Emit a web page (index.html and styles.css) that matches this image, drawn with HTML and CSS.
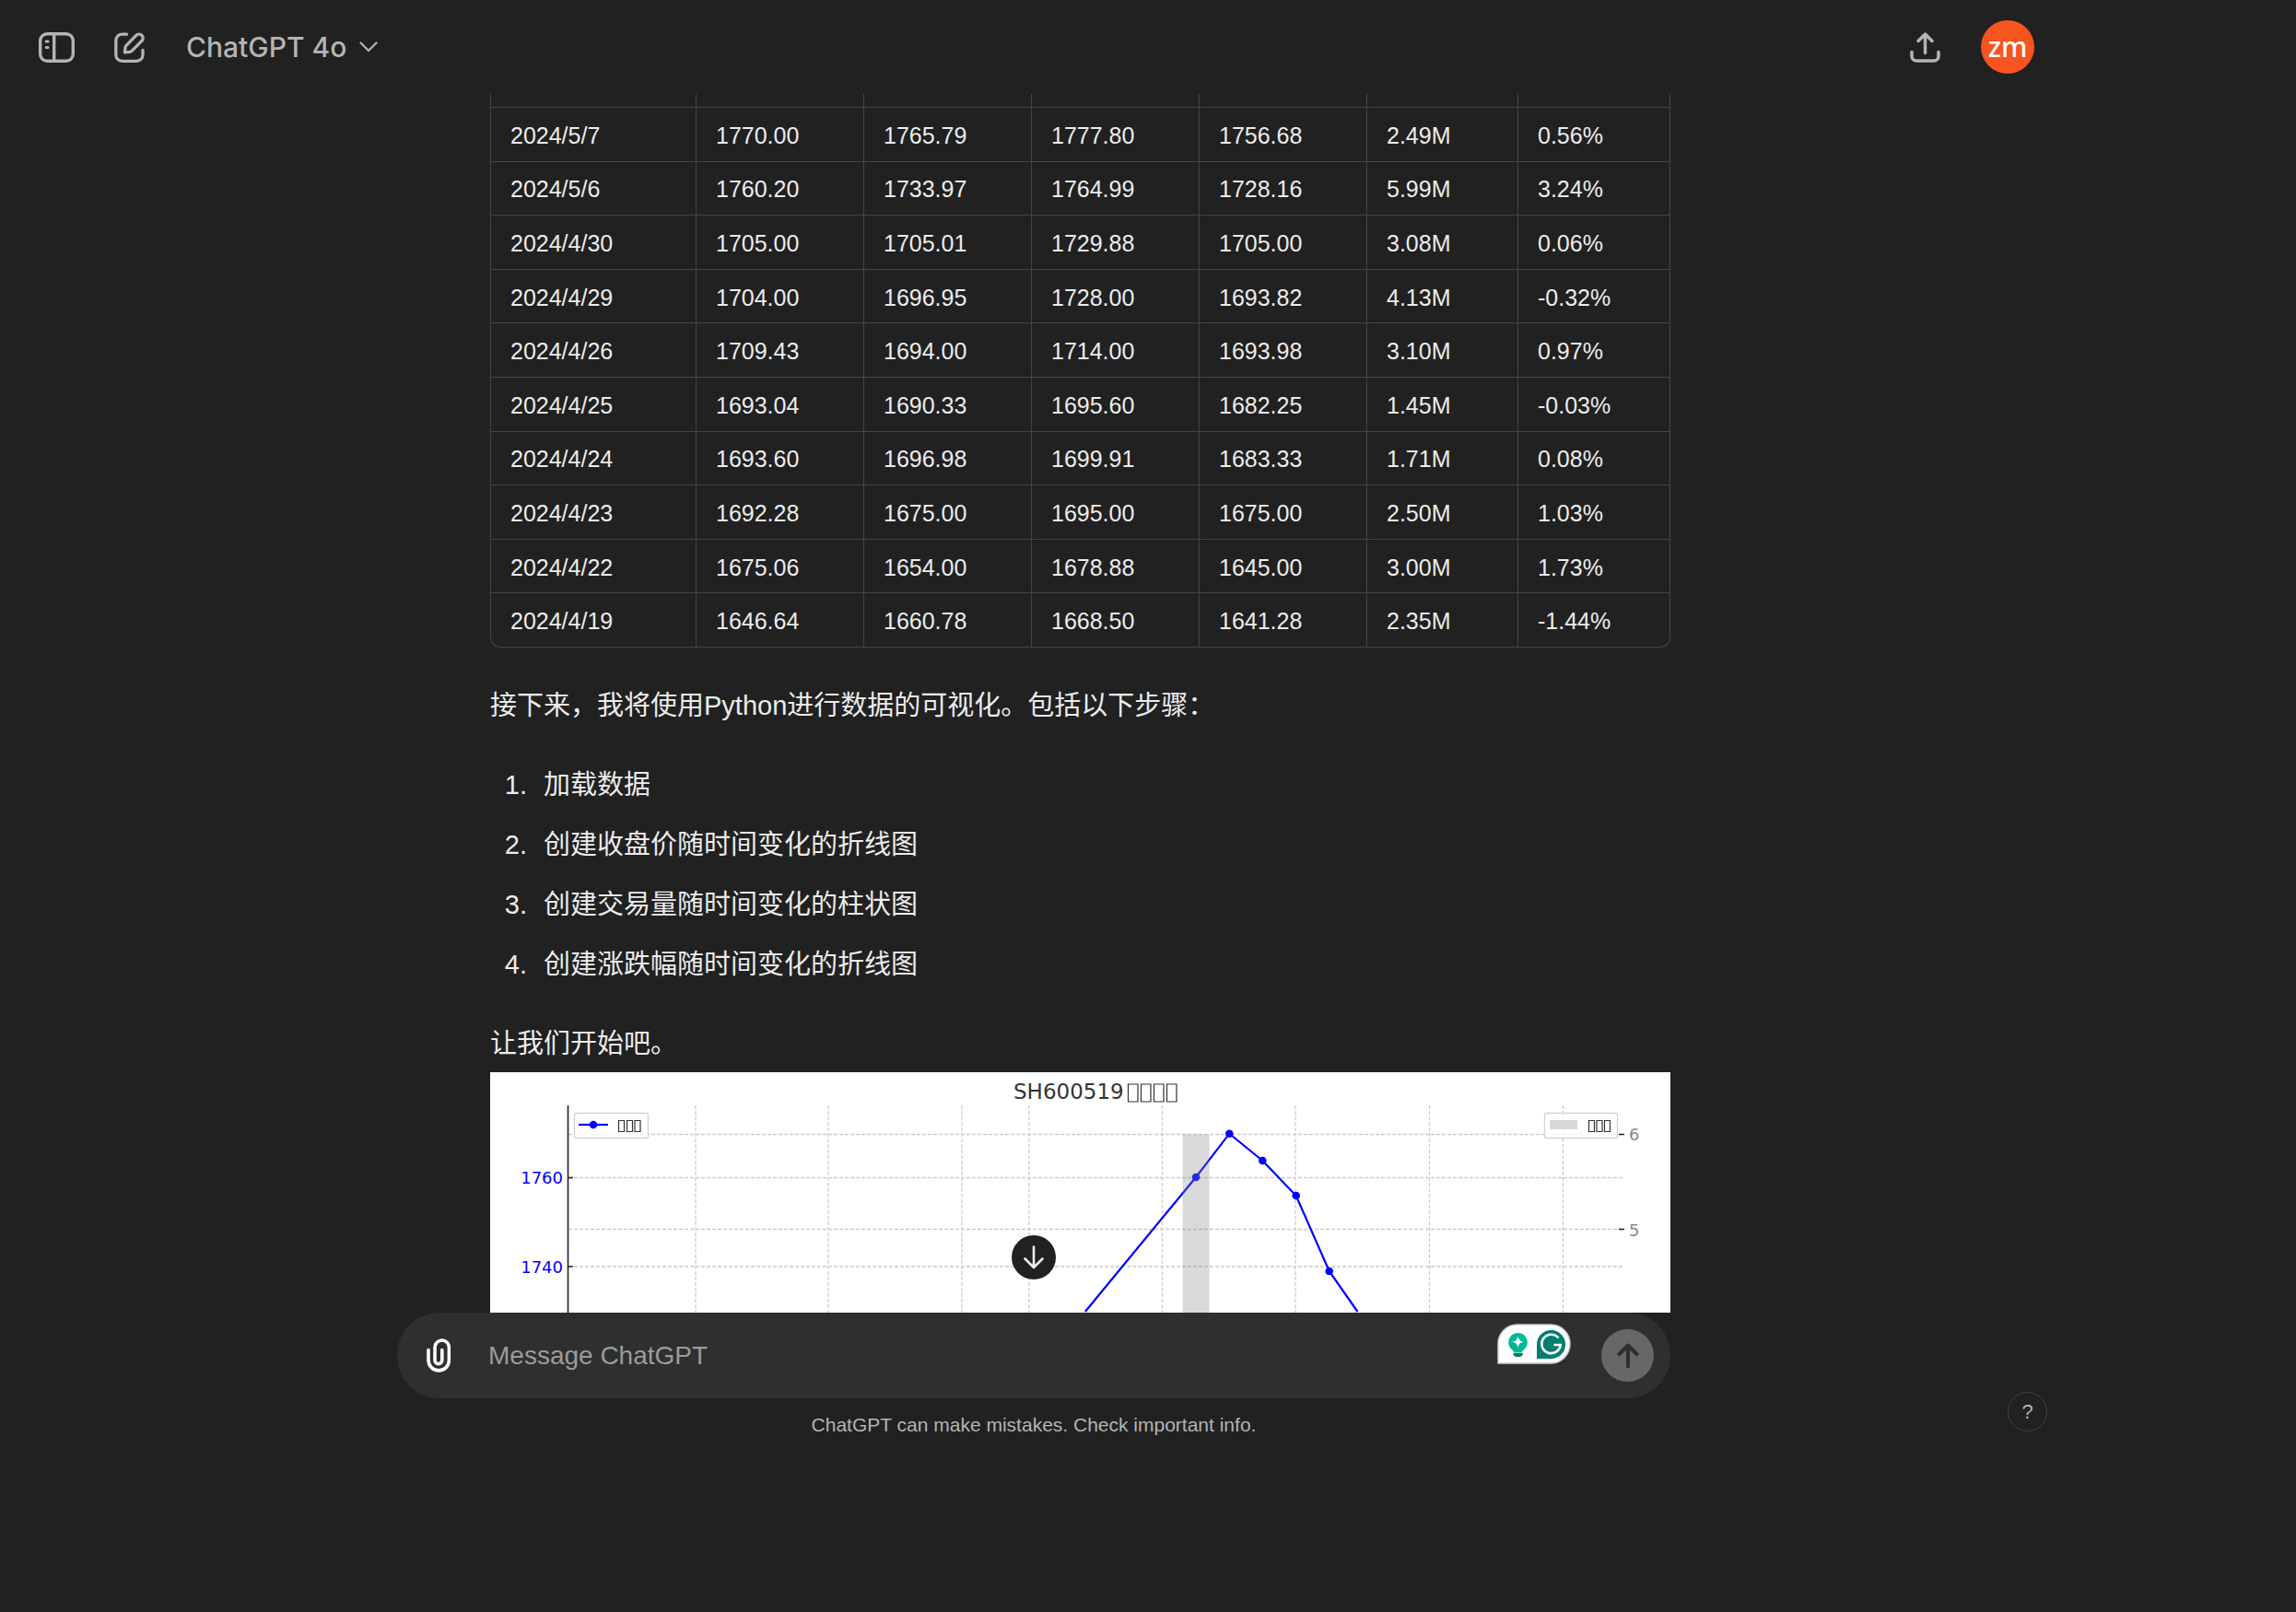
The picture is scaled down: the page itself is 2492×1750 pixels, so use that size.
FILE: index.html
```html
<!DOCTYPE html>
<html lang="zh-CN">
<head>
<meta charset="utf-8">
<meta name="viewport" content="width=device-width, initial-scale=1">
<title>ChatGPT</title>
<link rel="stylesheet" href="styles.css">
</head>
<body>
<div class="app">
  <header class="topbar">
    <div class="topbar-group">
      <button class="icon-button" type="button" aria-label="Open sidebar">
        <svg class="icon-sidebar" viewBox="0 0 39 33" fill="none" stroke="currentColor" stroke-width="3.4" stroke-linecap="round"><rect x="1.7" y="1.7" width="35.6" height="29.6" rx="7.5"/><path d="M16.7 2v29" stroke-linecap="butt"/><path d="M8.2 10h1.8M8.2 16.5h1.8" stroke-width="3.2"/></svg>
      </button>
      <button class="icon-button" type="button" aria-label="New chat">
        <svg class="icon-edit" viewBox="0 0 33 33" fill="none" stroke="currentColor" stroke-width="3.3" stroke-linecap="round" stroke-linejoin="round"><path d="M13.5 2.2H9C4.5 2.2 1.8 4.9 1.8 9.500v14.700c0 4.400 2.700 7.100 7.200 7.100h14.700c4.500 0 7.300-2.700 7.300-7.100v-4.700"/><path d="M11.400 21.900l.6-5.300c.1-.9.5-1.700 1.100-2.300L23.800 3.300a4.300 4.300 0 0 1 6.100 6.100L19 20.300c-.6.600-1.400 1-2.300 1.100z"/></svg>
      </button>
      <button class="model-button" type="button">ChatGPT 4o
        <svg class="icon-chevron" viewBox="0 0 20 12" fill="none" stroke="currentColor" stroke-width="2.200" stroke-linecap="round" stroke-linejoin="round"><path d="M1.500 1.500L10 10l8.500-8.500"/></svg>
      </button>
    </div>
    <div class="topbar-group topbar-right">
      <button class="icon-button" type="button" aria-label="Share">
        <svg class="icon-share" viewBox="0 0 33 33" fill="none" stroke="currentColor" stroke-width="3.500" stroke-linecap="round" stroke-linejoin="round"><path d="M16.500 22.500V2.500M9 9.500l7.500-7.500L24 9.500M2 21.500v4.500a5 5 0 0 0 5 5h19a5 5 0 0 0 5-5v-4.500"/></svg>
      </button>
      <button class="avatar" type="button">zm</button>
    </div>
  </header>

  <main class="thread">
    <article class="message">
      <table class="quotes">
        <colgroup><col class="col-date"><col class="col-price"><col class="col-price"><col class="col-price"><col class="col-price"><col class="col-volume"><col class="col-change"></colgroup>
        <tbody>
          <tr class="row-cut"><td></td><td></td><td></td><td></td><td></td><td></td><td></td></tr>
          <tr><td>2024/5/7</td><td>1770.00</td><td>1765.79</td><td>1777.80</td><td>1756.68</td><td>2.49M</td><td>0.56%</td></tr>
          <tr><td>2024/5/6</td><td>1760.20</td><td>1733.97</td><td>1764.99</td><td>1728.16</td><td>5.99M</td><td>3.24%</td></tr>
          <tr><td>2024/4/30</td><td>1705.00</td><td>1705.01</td><td>1729.88</td><td>1705.00</td><td>3.08M</td><td>0.06%</td></tr>
          <tr><td>2024/4/29</td><td>1704.00</td><td>1696.95</td><td>1728.00</td><td>1693.82</td><td>4.13M</td><td>-0.32%</td></tr>
          <tr><td>2024/4/26</td><td>1709.43</td><td>1694.00</td><td>1714.00</td><td>1693.98</td><td>3.10M</td><td>0.97%</td></tr>
          <tr><td>2024/4/25</td><td>1693.04</td><td>1690.33</td><td>1695.60</td><td>1682.25</td><td>1.45M</td><td>-0.03%</td></tr>
          <tr><td>2024/4/24</td><td>1693.60</td><td>1696.98</td><td>1699.91</td><td>1683.33</td><td>1.71M</td><td>0.08%</td></tr>
          <tr><td>2024/4/23</td><td>1692.28</td><td>1675.00</td><td>1695.00</td><td>1675.00</td><td>2.50M</td><td>1.03%</td></tr>
          <tr><td>2024/4/22</td><td>1675.06</td><td>1654.00</td><td>1678.88</td><td>1645.00</td><td>3.00M</td><td>1.73%</td></tr>
          <tr><td>2024/4/19</td><td>1646.64</td><td>1660.78</td><td>1668.50</td><td>1641.28</td><td>2.35M</td><td>-1.44%</td></tr>
        </tbody>
      </table>
      <p>接下来，我将使用Python进行数据的可视化。包括以下步骤：</p>
      <ol class="steps">
        <li>加载数据</li>
        <li>创建收盘价随时间变化的折线图</li>
        <li>创建交易量随时间变化的柱状图</li>
        <li>创建涨跌幅随时间变化的折线图</li>
      </ol>
      <p>让我们开始吧。</p>
      <svg class="chart" viewBox="0 0 1281 640" role="img" aria-label="SH600519">
        <rect width="1281" height="640" fill="#fff"/>
        <g class="grid">
          <path d="M223 36V600M367 36V600M512 36V600M585 36V600M729.500 36V600M874 36V600M1019.500 36V600M1164.500 36V600"/>
          <path d="M85 67.500H1231M85 114.500H1231M85 170.500H1231M85 211H1231"/>
        </g>
        <path class="axis" d="M84.500 36V600M85 114.500h5M85 211h5M1225 67.500h6M1225 170.500h6"/>
        <path class="series" d="M645.800 260L766 114 802.300 66.700 838.300 96 874.700 134 910.700 216 941.500 260"/>
        <g fill="#00f"><circle cx="766" cy="114" r="4.300"/><circle cx="802.300" cy="66.700" r="4.300"/><circle cx="838.300" cy="96" r="4.300"/><circle cx="874.700" cy="134" r="4.300"/><circle cx="910.700" cy="216" r="4.300"/></g>
        <rect x="751.600" y="67.500" width="29" height="532" fill="#808080" fill-opacity=".3"/>
        <g class="legend">
          <rect x="91.500" y="44.500" width="80" height="27" rx="2"/>
          <rect x="1144.500" y="44.500" width="79" height="27" rx="2"/>
        </g>
        <path class="series" d="M96 57h32"/><circle cx="112" cy="57" r="4.300" fill="#00f"/>
        <rect x="1150" y="52" width="30" height="10" fill="#d8d8d8"/>
        <g class="tofu">
          <path d="M139.500 52.500h6v12h-6zM148.500 52.500h6v12h-6zM157 52.500h6v12h-6z"/>
          <path d="M1192.500 52.500h6v12h-6zM1201 52.500h6v12h-6zM1209.500 52.500h6v12h-6z"/>
          <path d="M692.500 13h10.500v19h-10.500zM706.500 13h10.500v19h-10.500zM720.500 13h10.500v19h-10.500zM734.500 13h10.500v19h-10.500z"/>
        </g>
        <text class="chart-title" x="568" y="29">SH600519</text>
        <text class="tick-left" x="79" y="121">1760</text>
        <text class="tick-left" x="79" y="218">1740</text>
        <text class="tick-right" x="1236" y="74">6</text>
        <text class="tick-right" x="1236" y="178">5</text>
      </svg>
    </article>
  </main>

  <footer class="dock">
    <button class="scroll-down" type="button" aria-label="Scroll to bottom">
      <svg class="icon-down" viewBox="0 0 24 26" fill="none" stroke="currentColor" stroke-width="2.600" stroke-linecap="round" stroke-linejoin="round"><path d="M12 1.500v22M2.500 14.500l9.500 9.500 9.500-9.500"/></svg>
    </button>
    <form class="composer">
      <button class="attach" type="button" aria-label="Attach files">
        <svg class="icon-clip" viewBox="0 0 26 37" fill="none" stroke="currentColor" stroke-width="3.600" stroke-linecap="round"><path d="M2 12.500v11.200a11.200 11.200 0 0 0 22.400 0V9.700a7.700 7.700 0 0 0-15.400 0v14a3.900 3.900 0 0 0 7.800 0V12.500"/></svg>
      </button>
      <input class="prompt" type="text" placeholder="Message ChatGPT" aria-label="Message ChatGPT">
      <button class="assist" type="button" aria-label="Writing assistant">
        <svg viewBox="0 0 80 44"><path d="M1 43V22A21 21 0 0 1 22 1H58a21 21 0 0 1 0 42z" fill="#fff" stroke="#c9cbd6" stroke-width="1.500"/><path d="M22.500 10a10.300 10.300 0 0 0-5.200 19.200l1.200 2.300h8l1.200-2.300A10.300 10.300 0 0 0 22.500 10z" fill="#04b894"/><path d="M22.500 13.500c1 4.200 2 5.200 6 6.200-4 1-5 2-6 6.200-1-4.200-2-5.200-6-6.200 4-1 5-2 6-6.200z" fill="#fff"/><path d="M17.300 32h10.600c0 2.700-1.700 4-3.800 4h-3c-2.100 0-3.800-1.300-3.800-4z" fill="#027e6f"/><path d="M43 38V22a15.500 15.500 0 1 1 15.500 16z" fill="#027e6f"/><path d="M66.500 15.500a10.200 10.200 0 1 0 2.200 7.500h-7.200" fill="none" stroke="#fff" stroke-width="2.600"/></svg>
      </button>
      <button class="send" type="submit" aria-label="Send">
        <svg class="icon-up" viewBox="0 0 24 28" fill="none" stroke="currentColor" stroke-width="4" stroke-linecap="round" stroke-linejoin="round"><path d="M12 25.500V3M2.500 12L12 2.500 21.500 12"/></svg>
      </button>
    </form>
    <p class="disclaimer">ChatGPT can make mistakes. Check important info.</p>
    <button class="help" type="button" aria-label="Help">?</button>
  </footer>
</div>
</body>
</html>
```
FILE: styles.css
```css
* { box-sizing: border-box; }

body {
  margin: 0;
  padding-right: 248px;
  background: #212121;
  color: #ececec;
  font-family: "Liberation Sans", "Noto Sans CJK SC", sans-serif;
  font-size: 29px;
  line-height: 50px;
}

button {
  padding: 0;
  border: 0;
  background: none;
  color: inherit;
  font: inherit;
  cursor: pointer;
}

svg { display: block; }

.app {
  display: flex;
  flex-direction: column;
  height: 90vh;
}

/* Top bar */
.topbar {
  display: flex;
  flex: none;
  align-items: center;
  justify-content: space-between;
  height: 102px;
  padding: 0 36px 0 42px;
  color: #b4b4b4;
}

.topbar-group { display: flex; align-items: center; gap: 43px; }
.topbar-right { gap: 44px; }
.icon-sidebar { width: 39px; height: 33px; }
.icon-edit, .icon-share { width: 33px; height: 33px; }

.model-button {
  display: flex;
  align-items: center;
  gap: 14px;
  padding-left: 2px;
  font-family: Inter, sans-serif;
  font-size: 30px;
  font-weight: 500;
}

.icon-chevron { width: 20px; height: 12px; }

.avatar {
  width: 58px;
  height: 58px;
  border-radius: 50%;
  background: #f7541f;
  color: #fff;
  font-family: "Noto Sans", sans-serif;
  font-size: 30px;
  font-weight: 500;
  line-height: 52px;
}

/* Conversation */
.thread { flex: 1; min-height: 0; overflow: hidden; }

.message {
  max-width: 1382px;
  margin: 0 auto;
  padding-left: 101px;
}

.quotes {
  width: 100%;
  height: 601px;
  table-layout: fixed;
  border-collapse: separate;
  border-spacing: 0;
  font-size: 25px;
  line-height: 36px;
}

.col-date { width: 224px; }
.col-price { width: 182px; }
.col-volume { width: 164px; }
.col-change { width: 165px; }

.quotes td {
  padding: 2px 0 0 21px;
  border-right: 1px solid #444;
  border-bottom: 1px solid #444;
}

.quotes td:first-child { border-left: 1px solid #444; }
.row-cut { height: 15px; }
.quotes .row-cut td { padding: 0; }
.quotes tr:last-child td:first-child { border-bottom-left-radius: 11px; }
.quotes tr:last-child td:last-child { border-bottom-right-radius: 11px; }

.message p { margin: 38px 0 36px; }

.steps {
  display: flex;
  flex-direction: column;
  gap: 15px;
  margin: 36px 0;
  padding-left: 48px;
}

.steps li { padding-left: 10px; }
.message p:last-of-type { margin: 36px 0 6px; }

/* Chart */
.chart { width: 100%; height: auto; font-family: "DejaVu Sans", sans-serif; }
.grid { fill: none; stroke: #ccc; stroke-width: 1.3; stroke-dasharray: 4 2; }
.axis { fill: none; stroke: #222; stroke-width: 1.6; }
.series { fill: none; stroke: #00f; stroke-width: 2.2; }
.legend { fill: #fff; fill-opacity: .8; stroke: #d4d4d4; stroke-width: 1.4; }
.tofu { fill: none; stroke: #333; stroke-width: 1.2; }
.chart-title { fill: #333; font-size: 23px; }
.tick-left { fill: #00f; font-size: 18px; text-anchor: end; }
.tick-right { fill: #888; font-size: 18px; }

/* Composer */
.dock { position: relative; flex: none; height: 150px; }

.composer {
  display: flex;
  align-items: center;
  max-width: 1382px;
  height: 93px;
  margin: 0 auto;
  padding: 0 18px 0 32px;
  border-radius: 46px;
  background: #2f2f2f;
}

.attach { color: #fff; }
.icon-clip { width: 26px; height: 37px; }

.prompt {
  flex: 1;
  min-width: 0;
  height: 50px;
  margin-left: 41px;
  padding: 0;
  border: 0;
  outline: 0;
  background: none;
  color: #ececec;
  font: inherit;
  font-size: 28px;
}

.prompt::placeholder { color: #9b9b9b; opacity: 1; }

.assist { align-self: flex-start; width: 80px; height: 44px; margin: 12px 33px 0 0; }

.send {
  display: grid;
  place-items: center;
  width: 57px;
  height: 57px;
  border-radius: 50%;
  background: #676767;
  color: #2f2f2f;
}

.icon-up { width: 24px; height: 28px; }

.disclaimer {
  margin: 13px 0 0;
  color: #b4b4b4;
  font-size: 21px;
  line-height: 32px;
  text-align: center;
}

.scroll-down {
  position: absolute;
  top: -84px;
  left: 50%;
  display: grid;
  place-items: center;
  width: 48px;
  height: 48px;
  margin-left: -24px;
  border-radius: 50%;
  background: #212121;
  color: #ececec;
}

.icon-down { width: 24px; height: 26px; }

.help {
  position: absolute;
  top: 86px;
  right: 22px;
  width: 43px;
  height: 43px;
  border: 1px solid #424242;
  border-radius: 50%;
  color: #b4b4b4;
  font-size: 22px;
  line-height: 40px;
}
```
